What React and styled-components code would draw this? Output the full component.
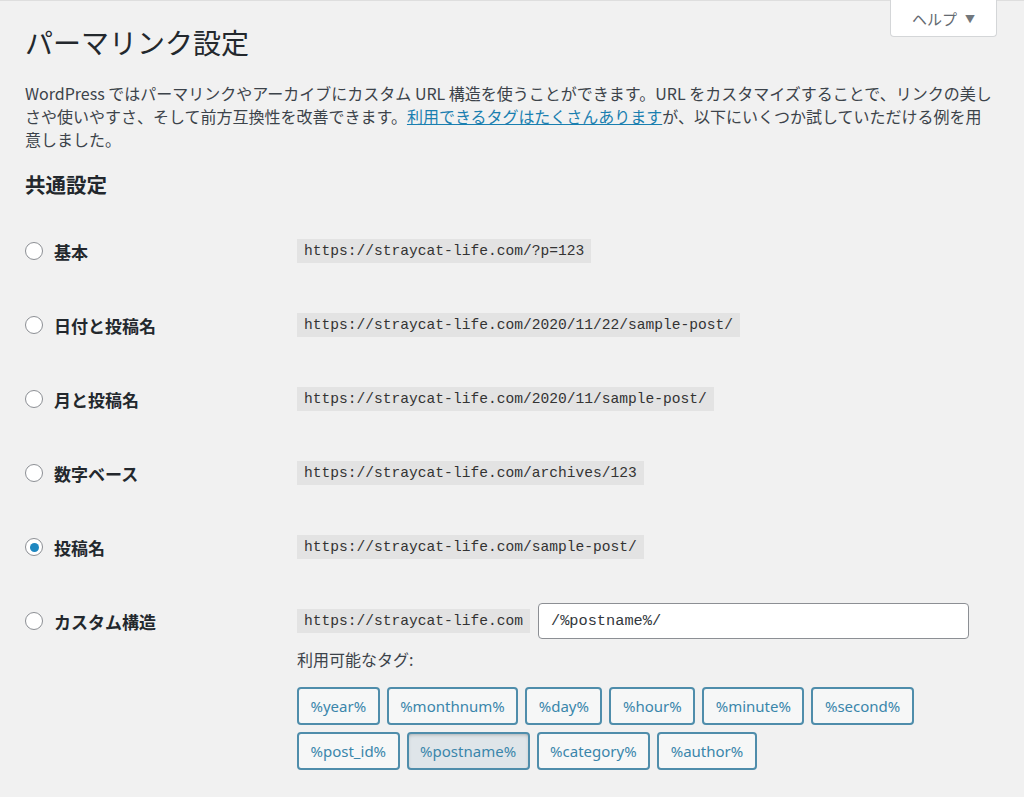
import styled, { createGlobalStyle } from "styled-components";

const Global = createGlobalStyle`
  body {
    margin: 0;
    background: #f1f1f1;
    font-family: "Noto Sans", "Noto Sans CJK JP", sans-serif;
    color: #3c434a;
  }
`;

const Page = styled.div`
  position: relative;
  min-height: 797px;
  box-sizing: border-box;
  border-top: 1px solid #dedede;
  padding: 0 0 0 25px;
`;

const HelpTab = styled.button`
  position: absolute;
  top: -1px;
  right: 27px;
  width: 107px;
  height: 37px;
  background: #fff;
  border: 1px solid #d4d6d8;
  border-top: none;
  border-radius: 0 0 4px 4px;
  font-family: "Noto Sans CJK JP", sans-serif;
  font-size: 15px;
  color: #646970;
  display: flex;
  align-items: center;
  justify-content: center;
  gap: 8px;
  padding: 0;
`;

const Caret = styled.span`
  font-size: 10px;
  color: #72777c;
`;

const Title = styled.h1`
  margin: 23px 0 0;
  font-family: "Noto Sans CJK JP", sans-serif;
  font-weight: 400;
  font-size: 28px;
  line-height: 36px;
  color: #23282d;
`;

const Intro = styled.p`
  margin: 22px 0 0;
  font-size: 16px;
  line-height: 23px;
  color: #3c434a;
  font-family: "Noto Sans CJK JP", sans-serif;
  white-space: nowrap;

  a {
    color: #1a7fb0;
    text-decoration: underline;
  }
`;

const Section = styled.h2`
  margin: 20px 0 0;
  font-family: "Noto Sans CJK JP", sans-serif;
  font-size: 20.5px;
  font-weight: 700;
  line-height: 26px;
  color: #23282d;
`;

const Options = styled.div`
  margin-top: 17px;
  display: flex;
  flex-direction: column;
`;

const Row = styled.div`
  display: grid;
  grid-template-columns: 272px 1fr;
  align-items: ${(p) => (p.$custom ? "start" : "center")};
  padding: ${(p) => (p.$custom ? "19px 0 0" : "25px 0")};
`;

const Label = styled.label`
  display: flex;
  align-items: center;
  gap: 11px;
  height: ${(p) => (p.$custom ? "36px" : "24px")};
  font-family: "Noto Sans CJK JP", sans-serif;
  font-size: 17px;
  font-weight: 700;
  color: #23282d;
`;

const Radio = styled.span`
  width: 18px;
  height: 18px;
  box-sizing: border-box;
  border-radius: 50%;
  border: 1.5px solid #8c8f94;
  background: #fff;
  display: flex;
  align-items: center;
  justify-content: center;

  &::after {
    content: "";
    width: 9px;
    height: 9px;
    border-radius: 50%;
    background: ${(p) => (p.$checked ? "#1e87c0" : "transparent")};
  }
`;

const Code = styled.code`
  justify-self: start;
  background: #e3e3e3;
  color: #333;
  font-family: "Liberation Mono", monospace;
  font-size: 14.6px;
  line-height: 18px;
  padding: 3px 7px;
`;

const Custom = styled.div`
  display: flex;
  flex-direction: column;
`;

const InputLine = styled.div`
  display: flex;
  align-items: center;
  gap: 8px;
`;

const Input = styled.input`
  width: 431px;
  height: 36px;
  box-sizing: border-box;
  border: 1.5px solid #8c8f94;
  border-radius: 4px;
  background: #fff;
  padding: 0 12px;
  font-family: "Liberation Mono", monospace;
  font-size: 15.3px;
  color: #32373c;
`;

const TagsTitle = styled.div`
  margin-top: 9px;
  font-family: "Noto Sans CJK JP", sans-serif;
  font-size: 16px;
  line-height: 22px;
  color: #3c434a;
`;

const Tags = styled.div`
  margin-top: 17px;
  display: flex;
  flex-wrap: wrap;
  gap: 7px;
  width: 640px;
`;

const Tag = styled.button`
  height: 38px;
  box-sizing: border-box;
  padding: 0 11.5px;
  border: 2px solid #4f8dab;
  border-radius: 4px;
  background: ${(p) => (p.$active ? "#dfe5e9" : "#f6f7f7")};
  box-shadow: ${(p) => (p.$active ? "inset 0 2px 5px -3px rgba(0,0,0,0.5)" : "none")};
  color: #3a86ab;
  font-family: "Noto Sans", sans-serif;
  font-size: 15px;
`;

const options = [
  { label: "基本", url: "https://straycat-life.com/?p=123" },
  { label: "日付と投稿名", url: "https://straycat-life.com/2020/11/22/sample-post/" },
  { label: "月と投稿名", url: "https://straycat-life.com/2020/11/sample-post/" },
  { label: "数字ベース", url: "https://straycat-life.com/archives/123" },
  { label: "投稿名", url: "https://straycat-life.com/sample-post/", checked: true },
];

const tags = [
  "%year%", "%monthnum%", "%day%", "%hour%", "%minute%", "%second%",
  "%post_id%", "%postname%", "%category%", "%author%",
];

export default function App() {
  return (
    <Page>
      <Global />
      <HelpTab>
        ヘルプ <Caret>▼</Caret>
      </HelpTab>
      <Title>パーマリンク設定</Title>
      <Intro>
        WordPress ではパーマリンクやアーカイブにカスタム URL 構造を使うことができます。URL をカスタマイズすることで、リンクの美し
        <br />
        さや使いやすさ、そして前方互換性を改善できます。<a href="#">利用できるタグはたくさんあります</a>が、以下にいくつか試していただける例を用
        <br />
        意しました。
      </Intro>
      <Section>共通設定</Section>
      <Options>
        {options.map((o) => (
          <Row key={o.label}>
            <Label>
              <Radio $checked={o.checked} />
              {o.label}
            </Label>
            <Code>{o.url}</Code>
          </Row>
        ))}
        <Row $custom>
          <Label $custom>
            <Radio />
            カスタム構造
          </Label>
          <Custom>
            <InputLine>
              <Code>https://straycat-life.com</Code>
              <Input defaultValue="/%postname%/" />
            </InputLine>
            <TagsTitle>利用可能なタグ:</TagsTitle>
            <Tags>
              {tags.map((t) => (
                <Tag key={t} $active={t === "%postname%"}>
                  {t}
                </Tag>
              ))}
            </Tags>
          </Custom>
        </Row>
      </Options>
    </Page>
  );
}
